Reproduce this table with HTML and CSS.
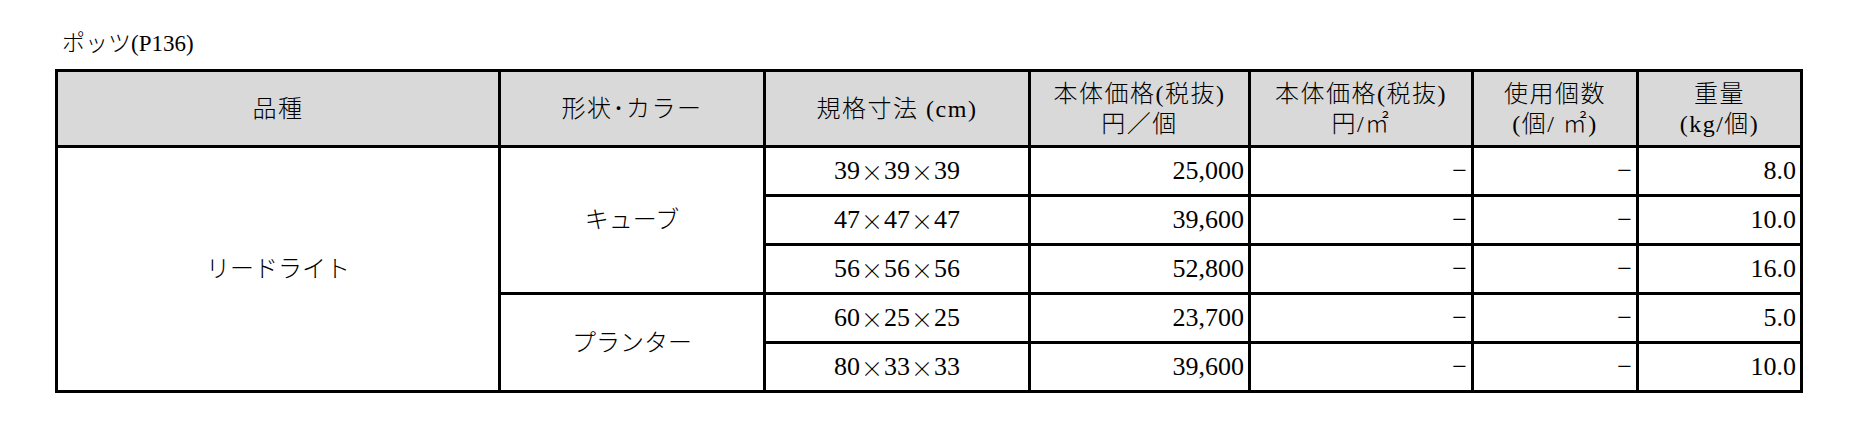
FILE: index.html
```html
<!DOCTYPE html>
<html lang="ja">
<head>
<meta charset="utf-8">
<title>ポッツ(P136)</title>
<link rel="stylesheet" href="styles.css">
</head>
<body>
<main class="page">
  <h2 class="caption">ポッツ(P136)</h2>
  <div class="sheet">
    <div class="cell head">品種</div>
    <div class="cell head">形状･カラー</div>
    <div class="cell head">規格寸法 (cm)</div>
    <div class="cell head">本体価格(税抜)<br>円／個</div>
    <div class="cell head">本体価格(税抜)<br>円/㎡</div>
    <div class="cell head">使用個数<br>(個/ ㎡)</div>
    <div class="cell head">重量<br>(kg/個)</div>

    <div class="cell name">リードライト</div>
    <div class="cell shape cube">キューブ</div>
    <div class="cell size">39<span class="x">×</span>39<span class="x">×</span>39</div>
    <div class="cell num">25,000</div>
    <div class="cell num">−</div>
    <div class="cell num">−</div>
    <div class="cell num">8.0</div>

    <div class="cell size">47<span class="x">×</span>47<span class="x">×</span>47</div>
    <div class="cell num">39,600</div>
    <div class="cell num">−</div>
    <div class="cell num">−</div>
    <div class="cell num">10.0</div>

    <div class="cell size">56<span class="x">×</span>56<span class="x">×</span>56</div>
    <div class="cell num">52,800</div>
    <div class="cell num">−</div>
    <div class="cell num">−</div>
    <div class="cell num">16.0</div>

    <div class="cell shape planter">プランター</div>
    <div class="cell size">60<span class="x">×</span>25<span class="x">×</span>25</div>
    <div class="cell num">23,700</div>
    <div class="cell num">−</div>
    <div class="cell num">−</div>
    <div class="cell num">5.0</div>

    <div class="cell size">80<span class="x">×</span>33<span class="x">×</span>33</div>
    <div class="cell num">39,600</div>
    <div class="cell num">−</div>
    <div class="cell num">−</div>
    <div class="cell num">10.0</div>
  </div>
</main>
</body>
</html>
```
FILE: styles.css
```css
html, body {
  margin: 0;
  padding: 0;
  background: #ffffff;
}

body {
  font-family: "Liberation Serif", "Noto Sans CJK JP", serif;
  color: #000000;
}

.page {
  padding: 29px 0 40px 55px;
}

.caption {
  margin: 0 0 11px 7px;
  font-size: 23px;
  line-height: 29px;
  font-weight: 300;
}

.sheet {
  display: grid;
  width: fit-content;
  grid-template-columns: 440px 262px 262px 217px 220px 162px 161px;
  grid-template-rows: 73px repeat(5, 46px);
  gap: 3px;
  padding: 3px;
  background: #000000;
}

.cell {
  background: #ffffff;
  display: flex;
  align-items: center;
  justify-content: center;
  font-size: 24px;
  font-weight: 300;
  line-height: 30px;
  text-align: center;
}

.head {
  background: #d9d9d9;
  font-size: 24px;
  letter-spacing: 1.5px;
}

.name {
  grid-row: 2 / span 5;
  grid-column: 1;
}

.shape {
  grid-column: 2;
}

.cube {
  grid-row: 2 / span 3;
}

.planter {
  grid-row: 5 / span 2;
}

.size {
  font-size: 26px;
}

.x {
  display: inline-block;
  width: 24px;
  font-family: "Noto Sans CJK JP", sans-serif;
  font-size: 22px;
}

.num {
  justify-content: flex-end;
  padding-right: 4px;
  font-size: 26px;
}
```
